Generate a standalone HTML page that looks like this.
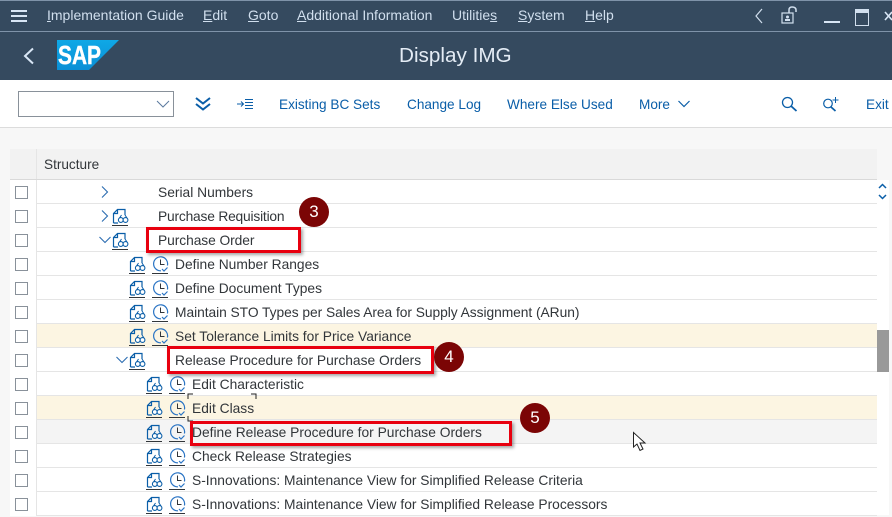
<!DOCTYPE html>
<html><head><meta charset="utf-8">
<style>
html,body{margin:0;padding:0;width:892px;height:515px;overflow:hidden;background:#f7f7f7;font-family:"Liberation Sans",sans-serif;color:#32363a}
div,span,svg{position:absolute}
.m{top:7px;font-size:14px;line-height:17px;color:#d1dfee;white-space:nowrap}
u{text-decoration:underline;text-underline-offset:1px}
.t{top:96px;font-size:13.6px;line-height:17px;color:#0a5ea8;white-space:nowrap}
.row{left:10px;width:867px;height:23px;background:#fff;border-bottom:1px solid #e5e5e5}
.sel{left:0;top:0;width:27px;height:24px;background:#fff;border-right:1px solid #e5e5e5;box-sizing:border-box}
.cb{left:5px;top:6px;width:11px;height:11px;border:1px solid #89919a;background:#fff}
.x{top:1px;font-size:13.8px;line-height:24px;color:#32363a;white-space:nowrap}
.red{border:3px solid #e8000f;box-sizing:border-box;box-shadow:2px 2px 3px rgba(0,0,0,.35)}
.c{width:30px;height:30px;border-radius:50%;background:#7b0505;color:#fff;font-size:17px;line-height:30px;text-align:center}
</style></head><body>
<svg width="0" height="0" style="position:absolute"><defs>
<symbol id="f" viewBox="0 0 17 19"><path d="M1.500 15V5.500L5.500 1.500H13V7M5.500 1.500V5.500H1.500M1.500 15H6" fill="none" stroke="#0a5ea8" stroke-width="1.200"/><circle cx="8.800" cy="12" r="2.400" fill="#fff" stroke="#0a5ea8" stroke-width="1.100"/><circle cx="13.500" cy="12" r="2.400" fill="#fff" stroke="#0a5ea8" stroke-width="1.100"/><path d="M9.500 7L7.500 10M13 7L15 10" stroke="#0a5ea8" fill="none"/><path d="M0 17.500H16" stroke="#32363a" stroke-width="1"/></symbol>
<symbol id="k" viewBox="0 0 17 19"><path d="M9 14.800A7 7 0 1 1 15.400 9.500" fill="none" stroke="#2a74c4" stroke-width="1.200"/><path d="M8.500 3.500V8.500H12.500" fill="none" stroke="#32363a" stroke-width="1"/><path d="M10 13L12 15L15.500 11.500" fill="none" stroke="#2a74c4" stroke-width="1.200"/><path d="M0 17.500H16" stroke="#32363a" stroke-width="1"/></symbol>
</defs></svg>

<div style="left:0;top:0;width:892px;height:80px;background:#354a5f"></div>
<div style="left:0;top:0;width:892px;height:1px;background:#7f93a9"></div>
<div style="left:0;top:31px;width:892px;height:1px;background:#7f93a9"></div>
<div style="left:11px;top:10px;width:16px;height:2px;background:#d8e6f5"></div>
<div style="left:11px;top:15px;width:16px;height:2px;background:#d8e6f5"></div>
<div style="left:11px;top:20px;width:16px;height:2px;background:#d8e6f5"></div>
<span class="m" style="left:47px"><u>I</u>mplementation Guide</span>
<span class="m" style="left:203px"><u>E</u>dit</span>
<span class="m" style="left:248px"><u>G</u>oto</span>
<span class="m" style="left:297px"><u>A</u>dditional Information</span>
<span class="m" style="left:452px">Utilitie<u>s</u></span>
<span class="m" style="left:518px"><u>S</u>ystem</span>
<span class="m" style="left:585px"><u>H</u>elp</span>
<svg style="left:750px;top:6px" width="20" height="20"><path d="M12 3L6 10L12 17" fill="none" stroke="#d1dfee" stroke-width="1.200"/></svg>
<svg style="left:780px;top:5px" width="20" height="20"><rect x="2" y="8" width="11" height="10" fill="none" stroke="#d1dfee" stroke-width="1.200"/><path d="M9 8V5Q9 2 12 2Q16 2 16 5V7" fill="none" stroke="#d1dfee" stroke-width="1.500"/><circle cx="7.500" cy="12" r="1.500" fill="#d1dfee"/><rect x="5" y="14" width="5" height="2" fill="#d1dfee"/></svg>
<div style="left:824px;top:21px;width:16px;height:2px;background:#d8e6f5"></div>
<div style="left:855px;top:9px;width:12px;height:12px;border:1.500px solid #d1dfee;border-top-width:4px"></div>
<svg style="left:884px;top:8px" width="8" height="16"><path d="M1 4L8 12M8 4L1 12" stroke="#d8e6f5" stroke-width="1.600" fill="none"/></svg>

<svg style="left:20px;top:44px" width="20" height="24"><path d="M13 4.500L5 12L13 19.500" fill="none" stroke="#d8e6f5" stroke-width="2"/></svg>
<svg style="left:57px;top:40px" width="62" height="30"><defs><linearGradient id="g" x1="0" y1="0" x2="0" y2="1"><stop offset="0" stop-color="#0fa8e6"/><stop offset="1" stop-color="#0a8fd6"/></linearGradient></defs><path d="M0 0H62L32 30H0Z" fill="url(#g)"/><text x="1" y="24" font-family="Liberation Sans,sans-serif" font-weight="700" font-size="26" fill="#fff" stroke="#fff" stroke-width=".4" textLength="43" lengthAdjust="spacingAndGlyphs">SAP</text></svg>
<span style="left:399px;top:44px;font-size:20.7px;line-height:24px;color:#e4ecf5;white-space:nowrap">Display IMG</span>

<div style="left:0;top:80px;width:892px;height:47px;background:#fff;border-bottom:1px solid #dcdcdc"></div>
<div style="left:18px;top:91px;width:154px;height:24px;border:1px solid #89919a;background:#fff"></div>
<svg style="left:155px;top:98px" width="16" height="12"><path d="M2 3L8 9L14 3" fill="none" stroke="#5b7a9e" stroke-width="1"/></svg>
<svg style="left:194px;top:96px" width="18" height="16"><path d="M2 2L9 7.500L16 2M2 8L9 13.500L16 8" fill="none" stroke="#0a5ea8" stroke-width="2"/></svg>
<svg style="left:236px;top:98px" width="18" height="12"><path d="M1 6H7M5 3.500L7.500 6L5 8.500" fill="none" stroke="#0a5ea8" stroke-width="1"/><path d="M9 1.500H17M9 4.500H17M9 7.500H17M9 10.500H17" stroke="#0a5ea8" stroke-width="1"/></svg>
<span class="t" style="left:279px">Existing BC Sets</span>
<span class="t" style="left:407px">Change Log</span>
<span class="t" style="left:507px">Where Else Used</span>
<span class="t" style="left:639px">More</span>
<svg style="left:677px;top:99px" width="14" height="10"><path d="M1.500 2L7 7.500L12.500 2" fill="none" stroke="#0a5ea8" stroke-width="1.200"/></svg>
<svg style="left:781px;top:96px" width="17" height="16"><circle cx="6.500" cy="6.500" r="5" fill="none" stroke="#0a5ea8" stroke-width="1.300"/><path d="M10 10L15.500 15" stroke="#0a5ea8" stroke-width="1.800"/></svg>
<svg style="left:822px;top:96px" width="18" height="16"><circle cx="6" cy="7.500" r="4.300" fill="none" stroke="#0a5ea8" stroke-width="1.200"/><path d="M9 11L13.500 15" stroke="#0a5ea8" stroke-width="1.700"/><path d="M13.500 1V7M10.500 4H16.500" stroke="#0a5ea8" stroke-width="1"/></svg>
<span class="t" style="left:866px">Exit</span>

<div style="left:10px;top:149px;width:867px;height:30px;background:#f2f2f2;border-bottom:1px solid #d9d9d9"></div>
<div style="left:36px;top:149px;width:1px;height:30px;background:#e5e5e5"></div>
<span style="left:44px;top:156px;font-size:13.6px;line-height:17px;color:#32363a">Structure</span>

<div class="row" style="top:180px"><div class="sel"><div class="cb"></div></div><span class="x" style="left:148px">Serial Numbers</span></div>
<div class="row" style="top:204px"><div class="sel"><div class="cb"></div></div><span class="x" style="left:148px;letter-spacing:-.2px">Purchase Requisition</span></div>
<div class="row" style="top:228px"><div class="sel"><div class="cb"></div></div><span class="x" style="left:148px;letter-spacing:-.07px">Purchase Order</span></div>
<div class="row" style="top:252px"><div class="sel"><div class="cb"></div></div><span class="x" style="left:165px">Define Number Ranges</span></div>
<div class="row" style="top:276px"><div class="sel"><div class="cb"></div></div><span class="x" style="left:165px">Define Document Types</span></div>
<div class="row" style="top:300px"><div class="sel"><div class="cb"></div></div><span class="x" style="left:165px;letter-spacing:-.05px">Maintain STO Types per Sales Area for Supply Assignment (ARun)</span></div>
<div class="row" style="top:324px;background:#fcf5e2"><div class="sel"><div class="cb"></div></div><span class="x" style="left:165px">Set Tolerance Limits for Price Variance</span></div>
<div class="row" style="top:348px"><div class="sel"><div class="cb"></div></div><span class="x" style="left:165px">Release Procedure for Purchase Orders</span></div>
<div class="row" style="top:372px"><div class="sel"><div class="cb"></div></div><span class="x" style="left:182px">Edit Characteristic</span></div>
<div class="row" style="top:396px;background:#fcf5e2"><div class="sel"><div class="cb"></div></div><span class="x" style="left:182px">Edit Class</span></div>
<div class="row" style="top:420px;background:#f4f4f4"><div class="sel"><div class="cb"></div></div><span class="x" style="left:182px">Define Release Procedure for Purchase Orders</span></div>
<div class="row" style="top:444px"><div class="sel"><div class="cb"></div></div><span class="x" style="left:182px">Check Release Strategies</span></div>
<div class="row" style="top:468px"><div class="sel"><div class="cb"></div></div><span class="x" style="left:182px">S-Innovations: Maintenance View for Simplified Release Criteria</span></div>
<div class="row" style="top:492px"><div class="sel"><div class="cb"></div></div><span class="x" style="left:182px">S-Innovations: Maintenance View for Simplified Release Processors</span></div>

<svg style="left:100px;top:185px" width="10" height="14"><path d="M2 1.500L7.500 7L2 12.500" fill="none" stroke="#2a6cb0" stroke-width="1.100"/></svg>
<svg style="left:100px;top:209px" width="10" height="14"><path d="M2 1.500L7.500 7L2 12.500" fill="none" stroke="#2a6cb0" stroke-width="1.100"/></svg>
<svg style="left:98px;top:235px" width="14" height="10"><path d="M1.500 2L7 7.500L12.500 2" fill="none" stroke="#2a6cb0" stroke-width="1.100"/></svg>
<svg style="left:115px;top:355px" width="14" height="10"><path d="M1.500 2L7 7.500L12.500 2" fill="none" stroke="#2a6cb0" stroke-width="1.100"/></svg>

<svg style="left:112px;top:208px" width="17" height="19"><use href="#f"/></svg>
<svg style="left:112px;top:232px" width="17" height="19"><use href="#f"/></svg>
<svg style="left:129px;top:256px" width="17" height="19"><use href="#f"/></svg>
<svg style="left:152px;top:256px" width="17" height="19"><use href="#k"/></svg>
<svg style="left:129px;top:280px" width="17" height="19"><use href="#f"/></svg>
<svg style="left:152px;top:280px" width="17" height="19"><use href="#k"/></svg>
<svg style="left:129px;top:304px" width="17" height="19"><use href="#f"/></svg>
<svg style="left:152px;top:304px" width="17" height="19"><use href="#k"/></svg>
<svg style="left:129px;top:328px" width="17" height="19"><use href="#f"/></svg>
<svg style="left:152px;top:328px" width="17" height="19"><use href="#k"/></svg>
<svg style="left:129px;top:352px" width="17" height="19"><use href="#f"/></svg>
<svg style="left:146px;top:376px" width="17" height="19"><use href="#f"/></svg>
<svg style="left:169px;top:376px" width="17" height="19"><use href="#k"/></svg>
<svg style="left:146px;top:400px" width="17" height="19"><use href="#f"/></svg>
<svg style="left:169px;top:400px" width="17" height="19"><use href="#k"/></svg>
<svg style="left:146px;top:424px" width="17" height="19"><use href="#f"/></svg>
<svg style="left:169px;top:424px" width="17" height="19"><use href="#k"/></svg>
<svg style="left:146px;top:448px" width="17" height="19"><use href="#f"/></svg>
<svg style="left:169px;top:448px" width="17" height="19"><use href="#k"/></svg>
<svg style="left:146px;top:472px" width="17" height="19"><use href="#f"/></svg>
<svg style="left:169px;top:472px" width="17" height="19"><use href="#k"/></svg>
<svg style="left:146px;top:496px" width="17" height="19"><use href="#f"/></svg>
<svg style="left:169px;top:496px" width="17" height="19"><use href="#k"/></svg>

<div style="left:877px;top:180px;width:12px;height:335px;background:#fff"></div>
<div style="left:877px;top:330px;width:12px;height:42px;background:#999"></div>
<svg style="left:877px;top:183px" width="11" height="20"><path d="M2 5L5.500 1.500L9 5M2 12L5.500 15.500L9 12" fill="none" stroke="#0a5ea8" stroke-width="1.500"/></svg>

<svg style="left:187px;top:393px" width="70" height="29"><path d="M1 6V1H6M64 1H69V6M1 23V28H6" fill="none" stroke="#222" stroke-width="1"/></svg>

<div class="red" style="left:146px;top:227px;width:155px;height:26px"></div>
<div class="red" style="left:167px;top:346px;width:267px;height:28px"></div>
<div class="red" style="left:190px;top:421px;width:322px;height:25px"></div>
<div class="c" style="left:299px;top:197px">3</div>
<div class="c" style="left:434px;top:342px">4</div>
<div class="c" style="left:520px;top:403px">5</div>

<svg style="left:632px;top:431px" width="16" height="22"><path d="M1.500 1.500V16L5 13L8 19.500L11 18L8 12H13Z" fill="#fff" stroke="#222" stroke-width="1"/></svg>
</body></html>
